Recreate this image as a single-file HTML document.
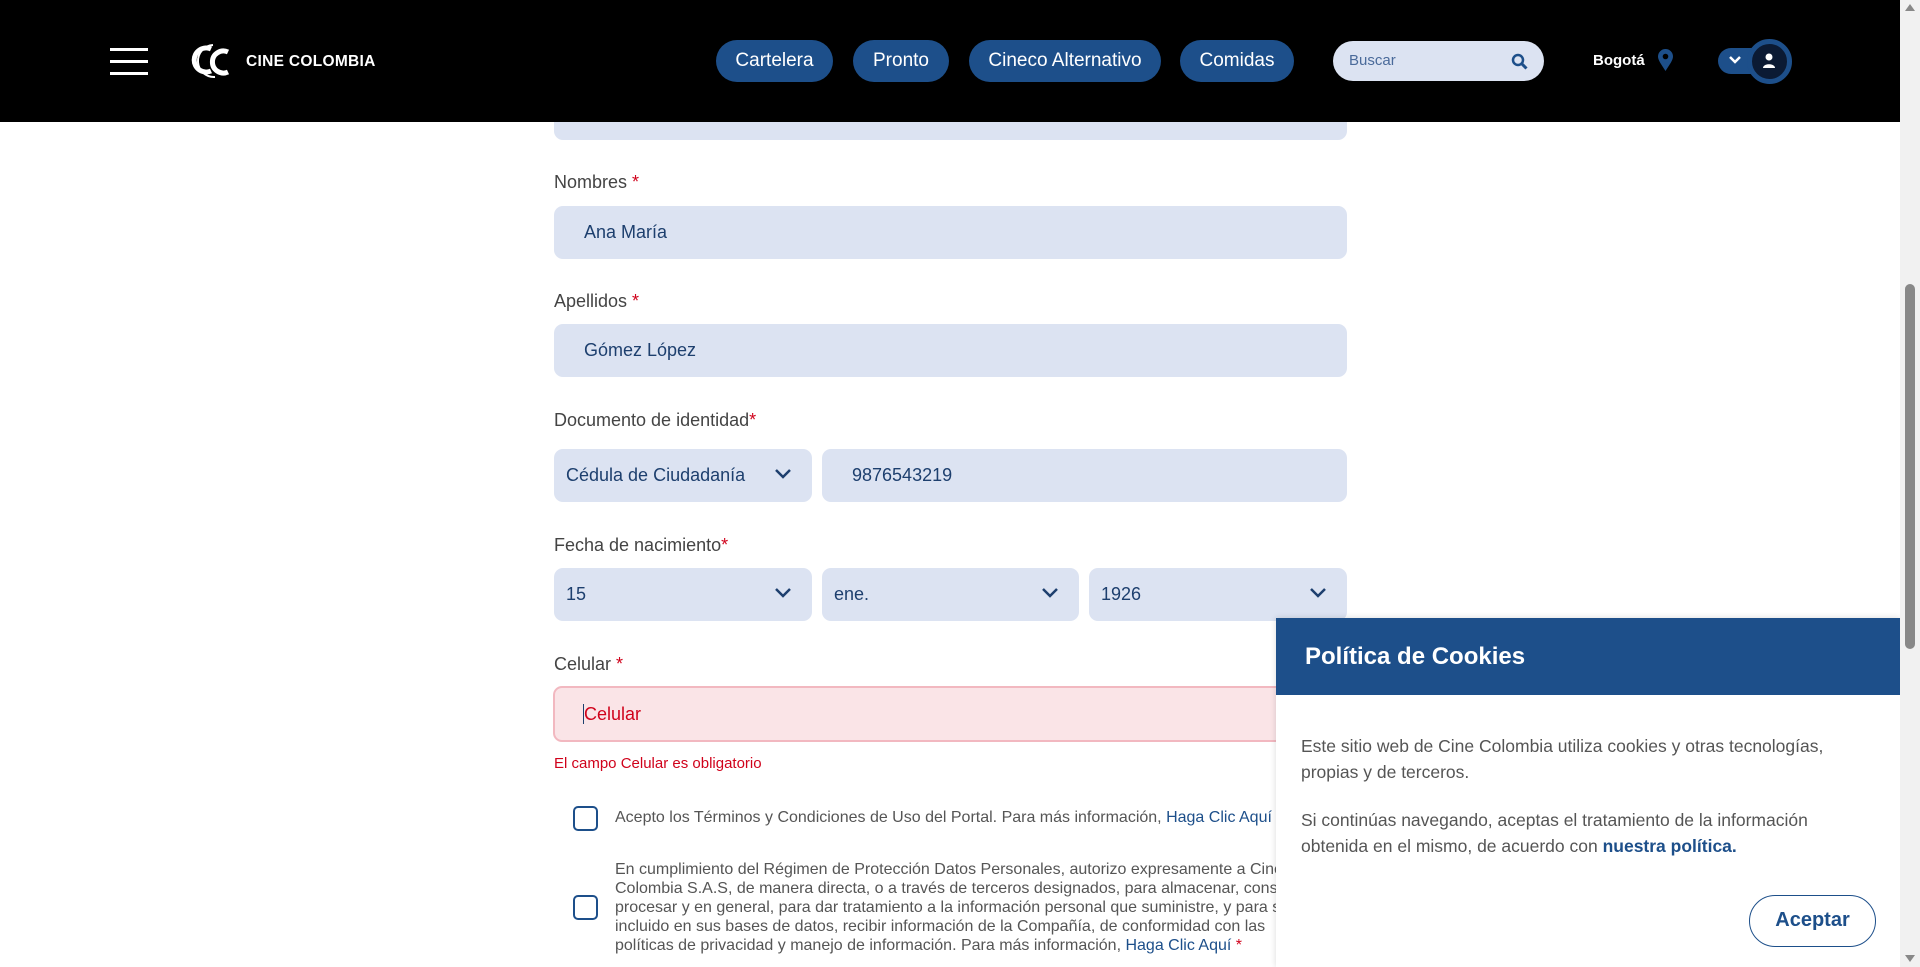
<!DOCTYPE html>
<html><head><meta charset="utf-8"><style>
*{box-sizing:border-box;margin:0;padding:0}
body{width:1920px;height:967px;overflow:hidden;background:#fff;font-family:"Liberation Sans",Arial,sans-serif;position:relative}
.hdr{position:absolute;left:0;top:0;width:1900px;height:122px;background:#000}
.ham{position:absolute;left:110px;width:38px;height:3px;background:#fff}
.nav{position:absolute;top:40px;height:42px;border-radius:21px;background:#1d4f8a;color:#fff;font-size:19px;line-height:42px;text-align:center}
.lbl{position:absolute;left:554px;font-size:18px;color:#444}
.lbl b{color:#d0021b;font-weight:normal}
.in{position:absolute;height:53px;background:#dce3f2;border-radius:9px;color:#1d3f6e;font-size:18px;line-height:53px;padding-left:30px}
.sel{padding-left:12px}
.chev{position:absolute;right:20px;top:19px;width:18px;height:12px}
.cb{position:absolute;left:573px;width:25px;height:25px;border:2px solid #1d4f8a;border-radius:5px}
.t{position:absolute;left:615px;font-size:16px;color:#555;line-height:19px;width:670px;white-space:nowrap;overflow:hidden}
.t a{color:#1d4f8a;text-decoration:none}
.ck{position:absolute;left:1276px;top:618px;width:624px;height:349px;background:#fff;box-shadow:0 0 6px rgba(0,0,0,.15)}
.ckh{height:77px;background:#1d4f8a;color:#fff;font-weight:bold;font-size:24px;line-height:77px;padding-left:29px}
.ckb{padding:38px 25px 0 25px;font-size:17.5px;color:#555;line-height:26px}
.ckb a{color:#1d4f8a;font-weight:bold;text-decoration:none}
.btn{position:absolute;left:473px;top:277px;width:127px;height:52px;border:1.5px solid #1d4f8a;border-radius:26px;color:#1d4f8a;font-size:20px;font-weight:bold;text-align:center;line-height:49px}
.sb{position:absolute;left:1900px;top:0;width:20px;height:967px;background:#f1f1f1}
</style></head><body>
<div class="hdr">
<div class="ham" style="top:48px"></div><div class="ham" style="top:60px"></div><div class="ham" style="top:72px"></div>
<svg style="position:absolute;left:187px;top:42px" width="52" height="38" viewBox="0 0 52 38"><path d="M24 7a12 12 0 1 0 0 22" fill="none" stroke="#fff" stroke-width="5"/><path d="M41 10a11 11 0 1 0 0 20" fill="none" stroke="#fff" stroke-width="5"/><path d="M26 3a16 16 0 1 0 2 32" fill="none" stroke="#fff" stroke-width="2"/></svg>
<div style="position:absolute;left:246px;top:53px;color:#fff;font-size:15.5px;font-weight:bold;letter-spacing:.3px">CINE COLOMBIA</div>
<div class="nav" style="left:716px;width:117px">Cartelera</div>
<div class="nav" style="left:853px;width:96px">Pronto</div>
<div class="nav" style="left:969px;width:192px">Cineco Alternativo</div>
<div class="nav" style="left:1180px;width:114px">Comidas</div>
<div style="position:absolute;left:1333px;top:41px;width:211px;height:40px;border-radius:20px;background:#dce3f2;color:#4a6a9a;font-size:15px;line-height:40px;padding-left:16px">Buscar
<svg style="position:absolute;right:16px;top:12px" width="17" height="17" viewBox="0 0 17 17"><circle cx="7" cy="7" r="5" fill="none" stroke="#1d4f8a" stroke-width="2.5"/><path d="M11 11l4.5 4.5" stroke="#1d4f8a" stroke-width="3"/></svg></div>
<div style="position:absolute;left:1593px;top:52px;color:#fff;font-weight:bold;font-size:15px">Bogotá</div>
<svg style="position:absolute;left:1658px;top:49px" width="15" height="22" viewBox="0 0 15 22"><path d="M7.5 22C3 15 0 11 0 7.5a7.5 7.5 0 0 1 15 0C15 11 12 15 7.5 22z" fill="#1d4f8a"/><circle cx="7.5" cy="7.5" r="2.8" fill="#000"/></svg>
<div style="position:absolute;left:1718px;top:48px;width:50px;height:26px;border-radius:13px;background:#1d4f8a"></div>
<svg style="position:absolute;left:1728px;top:55px" width="14" height="10" viewBox="0 0 14 10"><path d="M2 2l5 5 5-5" fill="none" stroke="#fff" stroke-width="2.5"/></svg>
<div style="position:absolute;left:1747px;top:39px;width:45px;height:45px;border-radius:50%;background:#0b1a33;border:5px solid #1d4f8a"></div>
<svg style="position:absolute;left:1760px;top:52px" width="18" height="18" viewBox="0 0 18 18"><circle cx="9" cy="5" r="3.5" fill="#fff"/><path d="M3 16c0-5 12-5 12 0z" fill="#fff"/></svg>
</div>
<div class="in" style="left:554px;top:122px;width:793px;height:18px;border-radius:0 0 9px 9px"></div>
<div class="lbl" style="top:172px">Nombres <b>*</b></div>
<div class="in" style="left:554px;top:206px;width:793px">Ana María</div>
<div class="lbl" style="top:291px">Apellidos <b>*</b></div>
<div class="in" style="left:554px;top:324px;width:793px">Gómez López</div>
<div class="lbl" style="top:410px">Documento de identidad<b>*</b></div>
<div class="in sel" style="left:554px;top:449px;width:258px">Cédula de Ciudadanía<svg class="chev" viewBox="0 0 18 12"><path d="M2 2l7 7 7-7" fill="none" stroke="#1d3f6e" stroke-width="2.5"/></svg></div>
<div class="in" style="left:822px;top:449px;width:525px">9876543219</div>
<div class="lbl" style="top:535px">Fecha de nacimiento<b>*</b></div>
<div class="in sel" style="left:554px;top:568px;width:258px">15<svg class="chev" viewBox="0 0 18 12"><path d="M2 2l7 7 7-7" fill="none" stroke="#1d3f6e" stroke-width="2.5"/></svg></div>
<div class="in sel" style="left:822px;top:568px;width:257px">ene.<svg class="chev" viewBox="0 0 18 12"><path d="M2 2l7 7 7-7" fill="none" stroke="#1d3f6e" stroke-width="2.5"/></svg></div>
<div class="in sel" style="left:1089px;top:568px;width:258px">1926<svg class="chev" viewBox="0 0 18 12"><path d="M2 2l7 7 7-7" fill="none" stroke="#1d3f6e" stroke-width="2.5"/></svg></div>
<div class="lbl" style="top:654px">Celular <b>*</b></div>
<div class="in" style="left:553px;top:686px;width:794px;height:56px;line-height:52px;background:#fae4e7;border:2px solid #f2b8c0;color:#d0021b;padding-left:28px"><span style="border-left:1px solid #1d3f6e"></span>Celular</div>
<div style="position:absolute;left:554px;top:755px;font-size:15px;color:#d0021b">El campo Celular es obligatorio</div>
<div class="cb" style="top:806px"></div>
<div class="t" style="top:808px">Acepto los Términos y Condiciones de Uso del Portal. Para más información, <a>Haga Clic Aquí</a></div>
<div class="cb" style="top:895px"></div>
<div class="t" style="top:860px">En cumplimiento del Régimen de Protección Datos Personales, autorizo expresamente a Cine<br>Colombia S.A.S, de manera directa, o a través de terceros designados, para almacenar, consultar,<br>procesar y en general, para dar tratamiento a la información personal que suministre, y para ser<br>incluido en sus bases de datos, recibir información de la Compañía, de conformidad con las<br>políticas de privacidad y manejo de información. Para más información, <a>Haga Clic Aquí</a> <span style="color:#d0021b">*</span></div>
<div class="ck"><div class="ckh">Política de Cookies</div>
<div class="ckb">Este sitio web de Cine Colombia utiliza cookies y otras tecnologías,<br>propias y de terceros.<div style="height:22px"></div>Si continúas navegando, aceptas el tratamiento de la información<br>obtenida en el mismo, de acuerdo con <a>nuestra política.</a></div>
<div class="btn">Aceptar</div></div>
<div class="sb"><div style="position:absolute;left:5px;top:284px;width:10px;height:365px;border-radius:5px;background:#888"></div>
<div style="position:absolute;left:5px;top:4px;border:5px solid transparent;border-bottom:7px solid #888;border-top:0"></div>
<div style="position:absolute;left:5px;top:955px;border:5px solid transparent;border-top:7px solid #888;border-bottom:0"></div></div>
</body></html>
